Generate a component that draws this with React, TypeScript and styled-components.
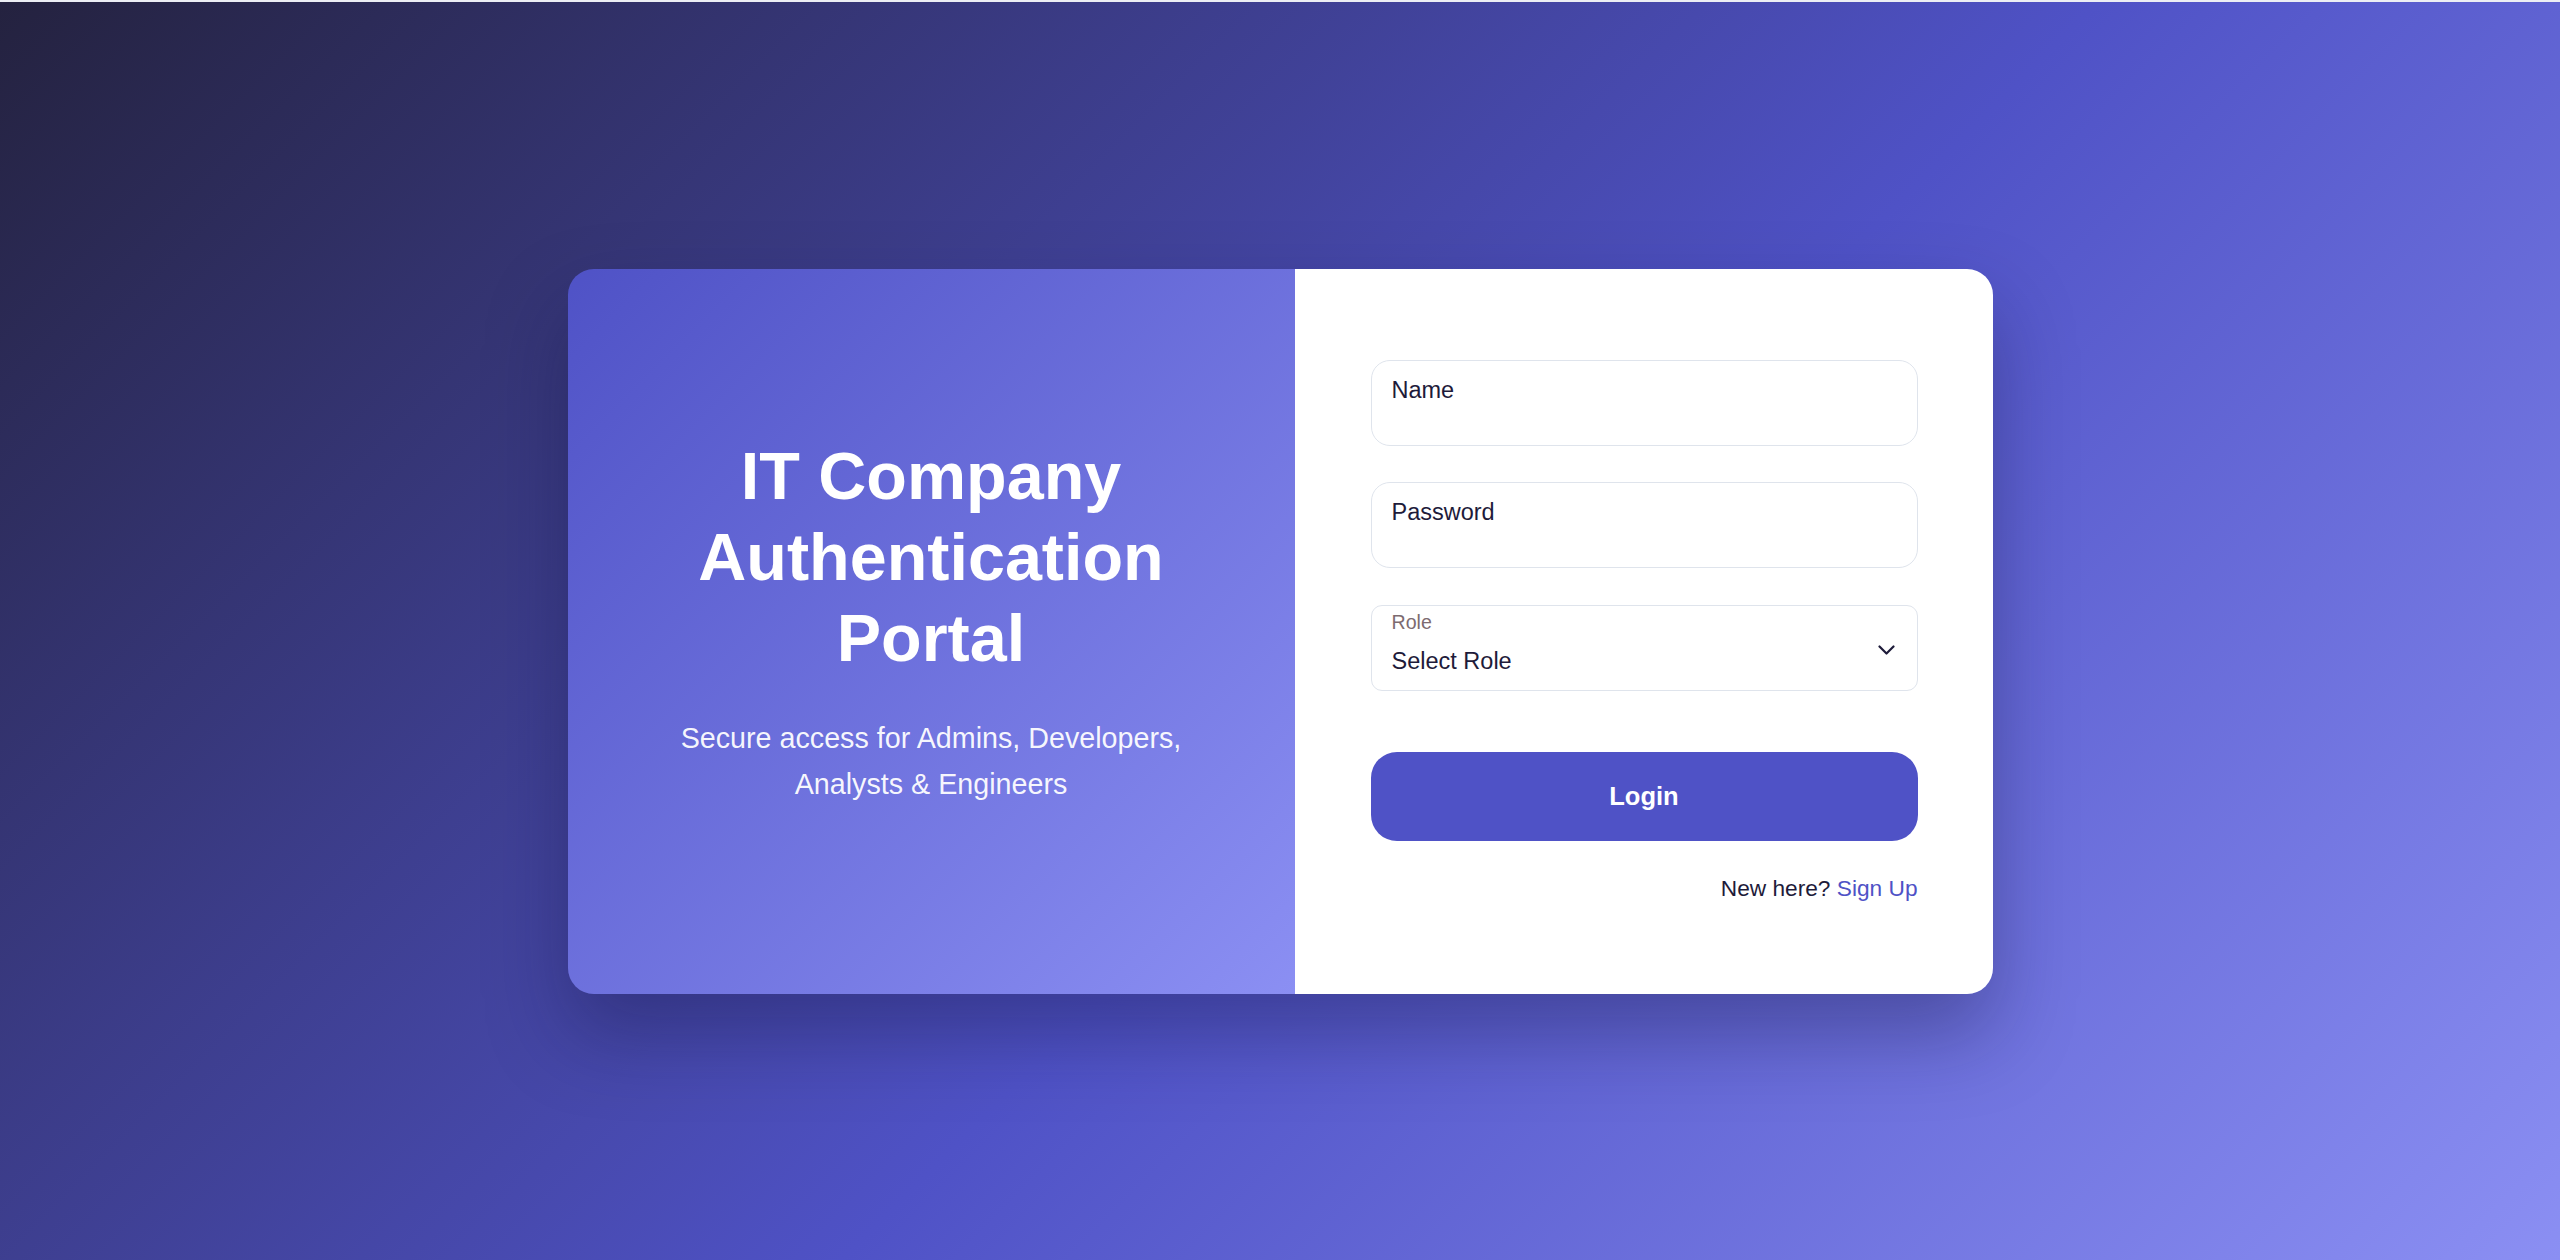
import styled, { createGlobalStyle } from "styled-components";

const GlobalStyle = createGlobalStyle`
  html, body {
    margin: 0;
    padding: 0;
    background: #eceef4;
  }
  * {
    box-sizing: border-box;
  }
  body {
    font-family: "Liberation Sans", Arial, sans-serif;
  }
`;

interface FieldProps {
  label: string;
  type?: string;
}

function TextField({ label, type = "text" }: FieldProps) {
  return (
    <FieldBox>
      <FieldLabel>{label}</FieldLabel>
      <FieldInput type={type} />
    </FieldBox>
  );
}

export default function App() {
  return (
    <>
      <GlobalStyle />
      <Page>
        <Card>
          <BrandPanel>
            <Title>IT Company Authentication Portal</Title>
            <Subtitle>
              Secure access for Admins, Developers, Analysts &amp; Engineers
            </Subtitle>
          </BrandPanel>
          <FormPanel>
            <TextField label="Name" />
            <TextField label="Password" type="password" />
            <SelectBox>
              <SelectText>
                <SmallLabel>Role</SmallLabel>
                <SelectValue>Select Role</SelectValue>
              </SelectText>
              <svg width="17" height="10" viewBox="0 0 17 10" fill="none">
                <path
                  d="M1.5 1.5l7 7 7-7"
                  stroke="#1e1b3a"
                  strokeWidth="2.2"
                  strokeLinecap="round"
                  strokeLinejoin="round"
                />
              </svg>
            </SelectBox>
            <LoginButton>Login</LoginButton>
            <SignupLine>
              New here? <SignupLink href="#">Sign Up</SignupLink>
            </SignupLine>
          </FormPanel>
        </Card>
      </Page>
    </>
  );
}

const Page = styled.div`
  margin-top: 2px;
  height: 1258px;
  display: flex;
  align-items: center;
  justify-content: center;
  background: linear-gradient(135deg, #24223f 0%, #4f52c6 55%, #8b8ff3 100%);
`;

const Card = styled.div`
  display: flex;
  width: 1425px;
  height: 725px;
  border-radius: 26px;
  overflow: hidden;
  box-shadow: 0 40px 80px rgba(18, 16, 60, 0.35);
`;

const BrandPanel = styled.div`
  flex: 0 0 727px;
  display: flex;
  flex-direction: column;
  align-items: center;
  justify-content: center;
  padding: 0 65px 20px;
  text-align: center;
  color: #ffffff;
  background: linear-gradient(135deg, #4f52c6 0%, #8b8ff3 100%);
`;

const Title = styled.h1`
  margin: 0;
  font-size: 66.5px;
  line-height: 81px;
  font-weight: 700;
`;

const Subtitle = styled.p`
  margin: 36px 0 0;
  font-size: 28.7px;
  line-height: 46px;
  color: rgba(255, 255, 255, 0.94);
`;

const FormPanel = styled.div`
  flex: 1;
  display: flex;
  flex-direction: column;
  padding: 91px 75px 0 76px;
  background: #ffffff;
`;

const FieldBox = styled.label`
  display: flex;
  flex-direction: column;
  height: 86px;
  padding: 16px 20px 0;
  margin-bottom: 36.5px;
  border: 1.5px solid #dfe4ec;
  border-radius: 19px;
  background: #ffffff;
`;

const FieldLabel = styled.span`
  font-size: 23.5px;
  color: #1e1b3a;
`;

const FieldInput = styled.input`
  flex: 1;
  border: none;
  outline: none;
  padding: 0;
  background: transparent;
  font: inherit;
  font-size: 23.5px;
  color: #1e1b3a;
`;

const SelectBox = styled.div`
  display: flex;
  align-items: center;
  justify-content: space-between;
  height: 86px;
  padding: 5px 22px 0 20px;
  border: 1.5px solid #dfe4ec;
  border-radius: 11px;
  background: #ffffff;
`;

const SelectText = styled.div`
  display: flex;
  flex-direction: column;
  align-self: flex-start;
`;

const SmallLabel = styled.span`
  font-size: 19.6px;
  color: #7d6b70;
`;

const SelectValue = styled.span`
  margin-top: 14px;
  font-size: 23.5px;
  color: #1e1b3a;
`;

const LoginButton = styled.button`
  margin-top: 61px;
  height: 89px;
  border: none;
  border-radius: 26px;
  background: #4f52c6;
  color: #ffffff;
  font-family: "Liberation Sans", Arial, sans-serif;
  font-size: 25.5px;
  font-weight: 700;
  cursor: pointer;
`;

const SignupLine = styled.p`
  margin: 34px 0 0;
  text-align: right;
  font-size: 22.7px;
  color: #1e1b3a;
`;

const SignupLink = styled.a`
  color: #4f52c6;
  text-decoration: none;
`;
